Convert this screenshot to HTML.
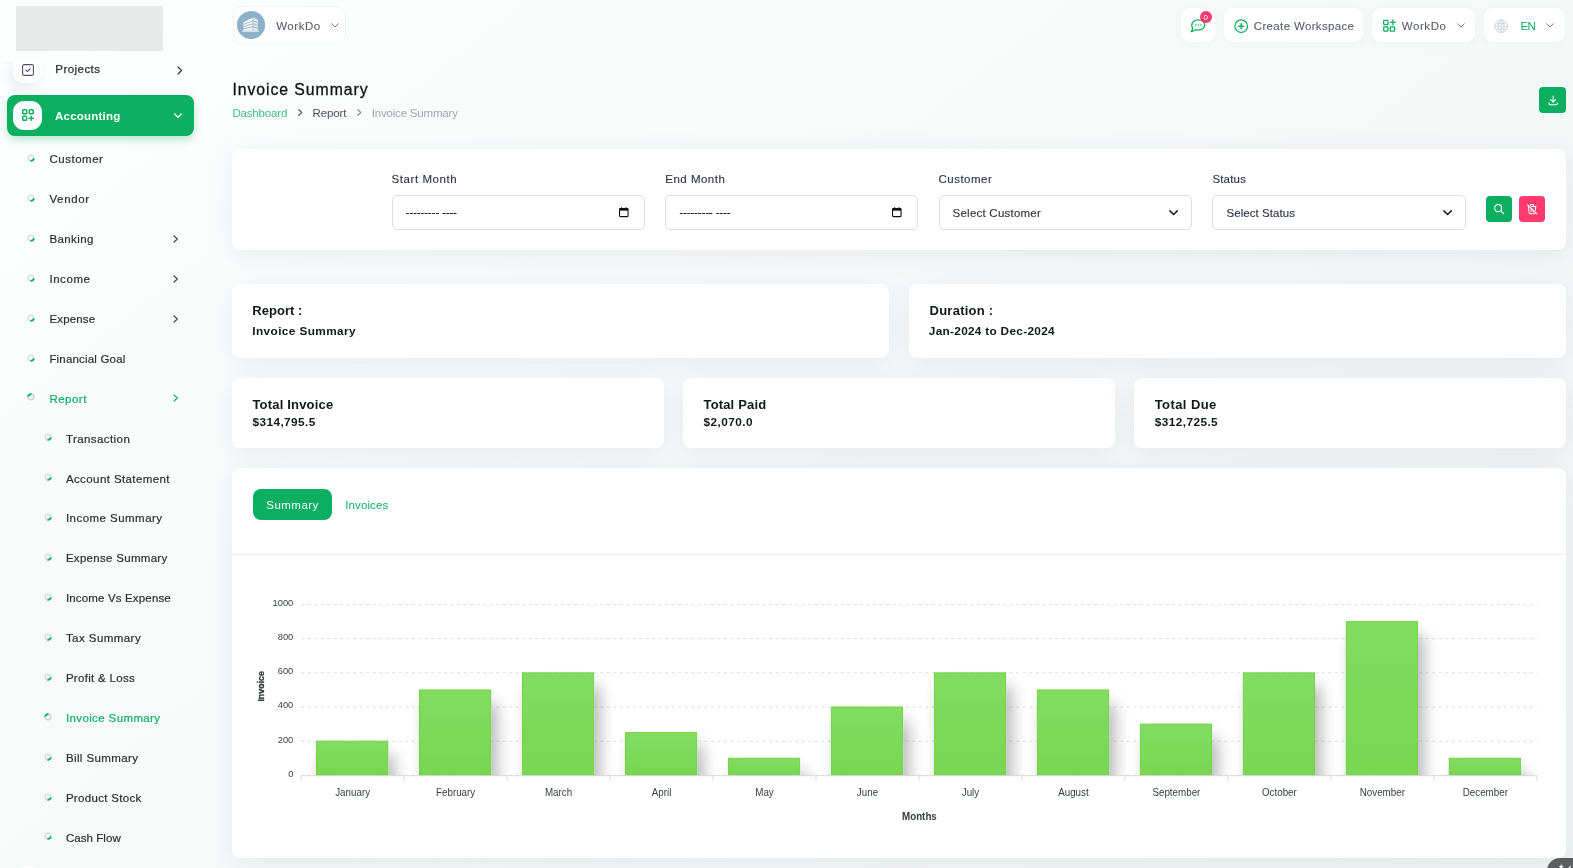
<!DOCTYPE html>
<html lang="en">
<head>
<meta charset="utf-8">
<title>Invoice Summary</title>
<style>
*{box-sizing:border-box;margin:0;padding:0}
html,body{width:1573px;height:868px;overflow:hidden}
body{background:linear-gradient(141.55deg,#fdfefe 3.46%,#f0f4f3 99.86%);font-family:"Liberation Sans",sans-serif;color:#293240;position:relative;font-size:12px}
.t{position:absolute;white-space:nowrap}
svg{position:absolute;overflow:visible}
#sidebar{position:absolute;left:0;top:0;width:212px;height:868px}
.logo{position:absolute;left:16px;top:6px;width:147px;height:45px;background:#e8eae9}
.bul{position:absolute;width:7px;height:7px}
.hbox{position:absolute;top:8.3px;height:33.4px;background:#fff;border-radius:9px;box-shadow:0 1px 6px rgba(190,198,210,.10)}
.card{position:absolute;background:#fff;border-radius:8px;box-shadow:0 5px 24px rgba(170,176,195,.21)}
.inp{position:absolute;border:1px solid #dadde3;border-radius:5px;background:#fff}
.btn{position:absolute;border-radius:4px}
</style>
</head>
<body>
<div id="root" style="position:absolute;left:0;top:0;width:1573px;height:868px;will-change:transform">

<div id="sidebar">
<div style="position:absolute;left:0;top:62px;width:212px;height:30px;overflow:hidden"><div style="position:absolute;left:13.4px;top:-7px;width:28.6px;height:28px;border-radius:11px;background:#fff;box-shadow:-4px 6px 14px rgba(150,160,180,.18)"></div></div>
<div class="logo"></div>
<svg style="left:21.7px;top:63.7px" width="12" height="12" viewBox="0 0 12 12" fill="none" stroke="#4b5168" stroke-width="1.1" stroke-linecap="round" stroke-linejoin="round"><rect x="0.6" y="0.6" width="10.8" height="10.8" rx="1.6"/><path d="M3.9 6.2l1.5 1.5 2.7-2.9"/></svg>
<div class="t " style="left:55.30px;top:63.49px;font-size:11.5px;line-height:13.22px;letter-spacing:0.451px;color:#2d2f36;-webkit-text-stroke:.25px #2d2f36;">Projects</div>
<svg style="left:176.6px;top:65.6px" width="6" height="9" viewBox="0 0 6 9" fill="none" stroke="#3a3d45" stroke-width="1.3" stroke-linecap="round" stroke-linejoin="round"><path d="M1 1l3.6 3.5L1 8"/></svg>
<div style="position:absolute;left:7.3px;top:95px;width:187px;height:40.5px;border-radius:8px;background:#0caf60;box-shadow:0 4px 9px rgba(12,175,96,.28)"></div>
<div style="position:absolute;left:13.2px;top:100.7px;width:29px;height:29.3px;border-radius:11px;background:#fff"></div>
<svg style="left:21.6px;top:109.2px" width="12" height="12" viewBox="0 0 12 12" fill="none" stroke="#0caf60" stroke-width="1.45" stroke-linecap="round" stroke-linejoin="round"><rect x="0.7" y="0.7" width="4" height="4" rx=".8"/><rect x="7.2" y="0.7" width="4" height="4" rx=".8"/><rect x="0.7" y="7.2" width="4" height="4" rx=".8"/><path d="M9.2 7.1v4.2M7.1 9.2h4.2"/></svg>
<div class="t " style="left:55.10px;top:109.69px;font-size:11.5px;line-height:13.22px;letter-spacing:0.217px;color:#fff;font-weight:bold;">Accounting</div>
<svg style="left:174.4px;top:112.8px" width="8" height="6" viewBox="0 0 8 6" fill="none" stroke="#fff" stroke-width="1.3" stroke-linecap="round" stroke-linejoin="round"><path d="M0.8 1l3.2 3.4L7.2 1"/></svg>
<svg style="left:27.30px;top:154.00px" width="8" height="8" viewBox="0 0 8 8" fill="none"><circle cx="4" cy="4" r="2.85" stroke="#d7dae9" stroke-width="1.5"/><path d="M6.82 4.40A2.85 2.85 0 0 1 3.51 6.81" stroke="#0caf60" stroke-width="1.9"/></svg>
<div class="t " style="left:49.40px;top:153.29px;font-size:11.5px;line-height:13.22px;letter-spacing:0.531px;color:#2b2d31;-webkit-text-stroke:.2px #2b2d31;">Customer</div>
<svg style="left:27.30px;top:193.91px" width="8" height="8" viewBox="0 0 8 8" fill="none"><circle cx="4" cy="4" r="2.85" stroke="#d7dae9" stroke-width="1.5"/><path d="M6.82 4.40A2.85 2.85 0 0 1 3.51 6.81" stroke="#0caf60" stroke-width="1.9"/></svg>
<div class="t " style="left:49.40px;top:193.20px;font-size:11.5px;line-height:13.22px;letter-spacing:0.654px;color:#2b2d31;-webkit-text-stroke:.2px #2b2d31;">Vendor</div>
<svg style="left:27.30px;top:233.82px" width="8" height="8" viewBox="0 0 8 8" fill="none"><circle cx="4" cy="4" r="2.85" stroke="#d7dae9" stroke-width="1.5"/><path d="M6.82 4.40A2.85 2.85 0 0 1 3.51 6.81" stroke="#0caf60" stroke-width="1.9"/></svg>
<div class="t " style="left:49.40px;top:233.11px;font-size:11.5px;line-height:13.22px;letter-spacing:0.400px;color:#2b2d31;-webkit-text-stroke:.2px #2b2d31;">Banking</div>
<svg style="left:172.8px;top:234.72px" width="6" height="8" viewBox="0 0 6 8" fill="none" stroke="#3a3d45" stroke-width="1.25" stroke-linecap="round" stroke-linejoin="round"><path d="M1 0.9l3.3 3.1L1 7.1"/></svg>
<svg style="left:27.30px;top:273.73px" width="8" height="8" viewBox="0 0 8 8" fill="none"><circle cx="4" cy="4" r="2.85" stroke="#d7dae9" stroke-width="1.5"/><path d="M6.82 4.40A2.85 2.85 0 0 1 3.51 6.81" stroke="#0caf60" stroke-width="1.9"/></svg>
<div class="t " style="left:49.40px;top:273.02px;font-size:11.5px;line-height:13.22px;letter-spacing:0.563px;color:#2b2d31;-webkit-text-stroke:.2px #2b2d31;">Income</div>
<svg style="left:172.8px;top:274.63px" width="6" height="8" viewBox="0 0 6 8" fill="none" stroke="#3a3d45" stroke-width="1.25" stroke-linecap="round" stroke-linejoin="round"><path d="M1 0.9l3.3 3.1L1 7.1"/></svg>
<svg style="left:27.30px;top:313.64px" width="8" height="8" viewBox="0 0 8 8" fill="none"><circle cx="4" cy="4" r="2.85" stroke="#d7dae9" stroke-width="1.5"/><path d="M6.82 4.40A2.85 2.85 0 0 1 3.51 6.81" stroke="#0caf60" stroke-width="1.9"/></svg>
<div class="t " style="left:49.40px;top:312.93px;font-size:11.5px;line-height:13.22px;letter-spacing:0.157px;color:#2b2d31;-webkit-text-stroke:.2px #2b2d31;">Expense</div>
<svg style="left:172.8px;top:314.54px" width="6" height="8" viewBox="0 0 6 8" fill="none" stroke="#3a3d45" stroke-width="1.25" stroke-linecap="round" stroke-linejoin="round"><path d="M1 0.9l3.3 3.1L1 7.1"/></svg>
<svg style="left:27.30px;top:353.55px" width="8" height="8" viewBox="0 0 8 8" fill="none"><circle cx="4" cy="4" r="2.85" stroke="#d7dae9" stroke-width="1.5"/><path d="M6.82 4.40A2.85 2.85 0 0 1 3.51 6.81" stroke="#0caf60" stroke-width="1.9"/></svg>
<div class="t " style="left:49.40px;top:352.84px;font-size:11.5px;line-height:13.22px;letter-spacing:0.188px;color:#2b2d31;-webkit-text-stroke:.2px #2b2d31;">Financial Goal</div>
<svg style="left:27.30px;top:393.46px" width="8" height="8" viewBox="0 0 8 8" fill="none"><circle cx="4" cy="4" r="2.85" stroke="#ccd1dd" stroke-width="1.5"/><path d="M1.18 3.60A2.85 2.85 0 0 1 4.49 1.19" stroke="#0caf60" stroke-width="1.9"/></svg>
<div class="t " style="left:49.40px;top:392.75px;font-size:11.5px;line-height:13.22px;letter-spacing:0.484px;color:#0caf60;-webkit-text-stroke:.2px #0caf60;">Report</div>
<svg style="left:172.8px;top:394.36px" width="6" height="8" viewBox="0 0 6 8" fill="none" stroke="#0caf60" stroke-width="1.25" stroke-linecap="round" stroke-linejoin="round"><path d="M1 0.9l3.3 3.1L1 7.1"/></svg>
<svg style="left:44.40px;top:433.37px" width="8" height="8" viewBox="0 0 8 8" fill="none"><circle cx="4" cy="4" r="2.85" stroke="#d7dae9" stroke-width="1.5"/><path d="M6.82 4.40A2.85 2.85 0 0 1 3.51 6.81" stroke="#0caf60" stroke-width="1.9"/></svg>
<div class="t " style="left:65.90px;top:432.66px;font-size:11.5px;line-height:13.22px;letter-spacing:0.427px;color:#2b2d31;-webkit-text-stroke:.2px #2b2d31;">Transaction</div>
<svg style="left:44.40px;top:473.28px" width="8" height="8" viewBox="0 0 8 8" fill="none"><circle cx="4" cy="4" r="2.85" stroke="#d7dae9" stroke-width="1.5"/><path d="M6.82 4.40A2.85 2.85 0 0 1 3.51 6.81" stroke="#0caf60" stroke-width="1.9"/></svg>
<div class="t " style="left:65.90px;top:472.57px;font-size:11.5px;line-height:13.22px;letter-spacing:0.405px;color:#2b2d31;-webkit-text-stroke:.2px #2b2d31;">Account Statement</div>
<svg style="left:44.40px;top:513.19px" width="8" height="8" viewBox="0 0 8 8" fill="none"><circle cx="4" cy="4" r="2.85" stroke="#d7dae9" stroke-width="1.5"/><path d="M6.82 4.40A2.85 2.85 0 0 1 3.51 6.81" stroke="#0caf60" stroke-width="1.9"/></svg>
<div class="t " style="left:65.90px;top:512.48px;font-size:11.5px;line-height:13.22px;letter-spacing:0.466px;color:#2b2d31;-webkit-text-stroke:.2px #2b2d31;">Income Summary</div>
<svg style="left:44.40px;top:553.10px" width="8" height="8" viewBox="0 0 8 8" fill="none"><circle cx="4" cy="4" r="2.85" stroke="#d7dae9" stroke-width="1.5"/><path d="M6.82 4.40A2.85 2.85 0 0 1 3.51 6.81" stroke="#0caf60" stroke-width="1.9"/></svg>
<div class="t " style="left:65.90px;top:552.39px;font-size:11.5px;line-height:13.22px;letter-spacing:0.299px;color:#2b2d31;-webkit-text-stroke:.2px #2b2d31;">Expense Summary</div>
<svg style="left:44.40px;top:593.01px" width="8" height="8" viewBox="0 0 8 8" fill="none"><circle cx="4" cy="4" r="2.85" stroke="#d7dae9" stroke-width="1.5"/><path d="M6.82 4.40A2.85 2.85 0 0 1 3.51 6.81" stroke="#0caf60" stroke-width="1.9"/></svg>
<div class="t " style="left:65.90px;top:592.30px;font-size:11.5px;line-height:13.22px;letter-spacing:0.161px;color:#2b2d31;-webkit-text-stroke:.2px #2b2d31;">Income Vs Expense</div>
<svg style="left:44.40px;top:632.92px" width="8" height="8" viewBox="0 0 8 8" fill="none"><circle cx="4" cy="4" r="2.85" stroke="#d7dae9" stroke-width="1.5"/><path d="M6.82 4.40A2.85 2.85 0 0 1 3.51 6.81" stroke="#0caf60" stroke-width="1.9"/></svg>
<div class="t " style="left:65.90px;top:632.21px;font-size:11.5px;line-height:13.22px;letter-spacing:0.446px;color:#2b2d31;-webkit-text-stroke:.2px #2b2d31;">Tax Summary</div>
<svg style="left:44.40px;top:672.83px" width="8" height="8" viewBox="0 0 8 8" fill="none"><circle cx="4" cy="4" r="2.85" stroke="#d7dae9" stroke-width="1.5"/><path d="M6.82 4.40A2.85 2.85 0 0 1 3.51 6.81" stroke="#0caf60" stroke-width="1.9"/></svg>
<div class="t " style="left:65.90px;top:672.12px;font-size:11.5px;line-height:13.22px;letter-spacing:0.306px;color:#2b2d31;-webkit-text-stroke:.2px #2b2d31;">Profit &amp; Loss</div>
<svg style="left:44.40px;top:712.74px" width="8" height="8" viewBox="0 0 8 8" fill="none"><circle cx="4" cy="4" r="2.85" stroke="#ccd1dd" stroke-width="1.5"/><path d="M1.18 3.60A2.85 2.85 0 0 1 4.49 1.19" stroke="#0caf60" stroke-width="1.9"/></svg>
<div class="t " style="left:65.90px;top:712.03px;font-size:11.5px;line-height:13.22px;letter-spacing:0.383px;color:#0caf60;-webkit-text-stroke:.2px #0caf60;">Invoice Summary</div>
<svg style="left:44.40px;top:752.65px" width="8" height="8" viewBox="0 0 8 8" fill="none"><circle cx="4" cy="4" r="2.85" stroke="#d7dae9" stroke-width="1.5"/><path d="M6.82 4.40A2.85 2.85 0 0 1 3.51 6.81" stroke="#0caf60" stroke-width="1.9"/></svg>
<div class="t " style="left:65.90px;top:751.94px;font-size:11.5px;line-height:13.22px;letter-spacing:0.397px;color:#2b2d31;-webkit-text-stroke:.2px #2b2d31;">Bill Summary</div>
<svg style="left:44.40px;top:792.56px" width="8" height="8" viewBox="0 0 8 8" fill="none"><circle cx="4" cy="4" r="2.85" stroke="#d7dae9" stroke-width="1.5"/><path d="M6.82 4.40A2.85 2.85 0 0 1 3.51 6.81" stroke="#0caf60" stroke-width="1.9"/></svg>
<div class="t " style="left:65.90px;top:791.85px;font-size:11.5px;line-height:13.22px;letter-spacing:0.310px;color:#2b2d31;-webkit-text-stroke:.2px #2b2d31;">Product Stock</div>
<svg style="left:44.40px;top:832.47px" width="8" height="8" viewBox="0 0 8 8" fill="none"><circle cx="4" cy="4" r="2.85" stroke="#d7dae9" stroke-width="1.5"/><path d="M6.82 4.40A2.85 2.85 0 0 1 3.51 6.81" stroke="#0caf60" stroke-width="1.9"/></svg>
<div class="t " style="left:65.90px;top:831.76px;font-size:11.5px;line-height:13.22px;letter-spacing:0.067px;color:#2b2d31;-webkit-text-stroke:.2px #2b2d31;">Cash Flow</div>
<div style="position:absolute;left:16px;top:865.5px;width:26px;height:20px;border-radius:10px;background:#fff"></div>
</div>
<div class="hbox" style="left:232.700px;top:6.3px;width:112.900px;height:37.700px;border-radius:9px;border:1px solid #f3f4f5;box-shadow:none"></div>
<svg style="left:237px;top:10.9px" width="28.1" height="28.1" viewBox="0 0 28 28"><circle cx="14" cy="14" r="14" fill="#8db0cb"/><path d="M6.300 11.100L15.900 6.500V19.500H6.300z" fill="#f2f6f9"/><path d="M15.900 6.500l4.900 2.300V19.500h-4.900z" fill="#dfe9f0"/><path d="M6.300 13.500l9.600-3.700 4.900 1.900M6.300 15.700l9.600-2.900 4.900 1.500M6.300 17.700l9.600-1.900 4.900 1.100" fill="none" stroke="#8db0cb" stroke-width=".8"/><path d="M15.900 6.500V19.500" stroke="#8db0cb" stroke-width=".6"/><rect x="5.200" y="19.400" width="16.600" height="1.200" fill="#f2f6f9"/></svg>
<div class="t " style="left:276.20px;top:19.99px;font-size:11.5px;line-height:13.22px;letter-spacing:0.535px;color:#555b70;-webkit-text-stroke:.08px #555b70;">WorkDo</div>
<svg style="left:330.5px;top:22.8px" width="8" height="5" viewBox="0 0 8 5" fill="none" stroke="#6a6f83" stroke-width=".95" stroke-linecap="round" stroke-linejoin="round"><path d="M0.7 0.8l3.3 3.2 3.3-3.2"/></svg>
<div class="hbox" style="left:1180.7px;width:34.4px"></div>
<svg style="left:1190.4px;top:19.2px" width="15.5" height="13.5" viewBox="0 0 31 27" fill="none" stroke="#0caf60" stroke-width="2.6" stroke-linecap="round" stroke-linejoin="round"><path d="M16.5 1.6c7.2 0 13 4.6 13 10.3s-5.8 10.3-13 10.3c-1.9 0-3.7-.3-5.3-.9-1.700 1.800-5.100 3.700-8.900 3.900 1.900-1.700 3.100-4.300 3.300-6.400C4.300 17 3.500 14.600 3.500 11.900 3.500 6.200 9.300 1.600 16.500 1.600z"/><g stroke="none" fill="#0caf60"><circle cx="11.3" cy="12.2" r="1.5"/><circle cx="16.500" cy="12.2" r="1.5"/><circle cx="21.7" cy="12.2" r="1.5"/></g></svg>
<div style="position:absolute;left:1199.6px;top:10.5px;width:12.4px;height:12.4px;border-radius:50%;background:#ff3a6e"></div>
<div class="t " style="left:1203.50px;top:13.16px;font-size:8px;line-height:9.20px;letter-spacing:0.000px;color:#fff;">0</div>
<div class="hbox" style="left:1224px;width:139.2px"></div>
<svg style="left:1234px;top:18.6px" width="14.4" height="14.4" viewBox="0 0 14.4 14.4" fill="none" stroke="#0caf60" stroke-width="1.25" stroke-linecap="round"><circle cx="7.2" cy="7.2" r="6.3"/><path d="M7.2 4.7v5M4.7 7.200h5" stroke-width="1.4"/></svg>
<div class="t " style="left:1253.80px;top:19.99px;font-size:11.5px;line-height:13.22px;letter-spacing:0.345px;color:#555b70;-webkit-text-stroke:.08px #555b70;">Create Workspace</div>
<div class="hbox" style="left:1371.9px;width:103px"></div>
<svg style="left:1382.6px;top:19.4px" width="13.4" height="12.8" viewBox="0 0 13.4 12.8" fill="none" stroke="#0caf60" stroke-width="1.3" stroke-linecap="round" stroke-linejoin="round"><rect x="0.7" y="1.3" width="4.3" height="4.3" rx=".7"/><rect x="0.700" y="7.8" width="4.3" height="4.3" rx=".7"/><rect x="7.3" y="7.8" width="4.3" height="4.3" rx=".7"/><path d="M9.9 0.8v5M7.4 3.3h5"/></svg>
<div class="t " style="left:1401.70px;top:19.99px;font-size:11.5px;line-height:13.22px;letter-spacing:0.595px;color:#555b70;-webkit-text-stroke:.08px #555b70;">WorkDo</div>
<svg style="left:1456.8px;top:22.8px" width="8" height="5" viewBox="0 0 8 5" fill="none" stroke="#6a6f83" stroke-width=".95" stroke-linecap="round" stroke-linejoin="round"><path d="M0.7 0.8l3.3 3.2 3.3-3.2"/></svg>
<div class="hbox" style="left:1483.8px;width:81.1px"></div>
<svg style="left:1494.2px;top:18.6px" width="14.4" height="14.4" viewBox="0 0 14.4 14.4" fill="none" stroke="#d2d5da" stroke-width="1"><circle cx="7.2" cy="7.2" r="6.4"/><ellipse cx="7.2" cy="7.2" rx="2.8" ry="6.4"/><path d="M0.8 7.2h12.8M7.2 0.8v12.800M1.900 3.900c3.300 1.100 7.300 1.100 10.600 0M1.900 10.500c3.300-1.100 7.300-1.100 10.600 0"/></svg>
<div class="t " style="left:1520.40px;top:19.99px;font-size:11.5px;line-height:13.22px;letter-spacing:-0.476px;color:#0caf60;">EN</div>
<svg style="left:1546.4px;top:22.8px" width="8" height="5" viewBox="0 0 8 5" fill="none" stroke="#6a6f83" stroke-width=".95" stroke-linecap="round" stroke-linejoin="round"><path d="M0.7 0.8l3.3 3.2 3.3-3.2"/></svg>
<div class="t " style="left:232.40px;top:81.49px;font-size:15.8px;line-height:18.17px;letter-spacing:0.939px;color:#0f1114;-webkit-text-stroke:.3px #0f1114;">Invoice Summary</div>
<div class="t " style="left:232.40px;top:106.89px;font-size:11.5px;line-height:13.22px;letter-spacing:-0.158px;color:#43be85;">Dashboard</div>
<svg style="left:297.6px;top:109.4px" width="5" height="7" viewBox="0 0 5 7" fill="none" stroke="#5a5f6c" stroke-width="1.3" stroke-linecap="round" stroke-linejoin="round"><path d="M0.800 0.800l3 2.700-3 2.700"/></svg>
<div class="t " style="left:312.60px;top:106.89px;font-size:11.5px;line-height:13.22px;letter-spacing:-0.144px;color:#4a4f5e;">Report</div>
<svg style="left:356.5px;top:109.4px" width="5" height="7" viewBox="0 0 5 7" fill="none" stroke="#8a8e98" stroke-width="1.3" stroke-linecap="round" stroke-linejoin="round"><path d="M0.800 0.800l3 2.700-3 2.700"/></svg>
<div class="t " style="left:371.70px;top:106.89px;font-size:11.5px;line-height:13.22px;letter-spacing:-0.181px;color:#a0a4ad;">Invoice Summary</div>
<div class="btn" style="left:1539.4px;top:87.2px;width:26.6px;height:26px;background:#0caf60"></div>
<svg style="left:1546.75px;top:94.4px" width="12.2" height="12.2" viewBox="0 0 24 24" fill="none" stroke="#fff" stroke-width="2" stroke-linecap="round" stroke-linejoin="round"><path d="M4 17v2a2 2 0 0 0 2 2h12a2 2 0 0 0 2-2v-2M7 11l5 5 5-5M12 4v12"/></svg>
<div class="card" style="left:232px;top:148.6px;width:1334.2px;height:101.6px"></div>
<div class="t " style="left:391.60px;top:173.39px;font-size:11.5px;line-height:13.22px;letter-spacing:0.556px;color:#2c3345;-webkit-text-stroke:.12px #2c3345;">Start Month</div>
<div class="t " style="left:665.30px;top:173.39px;font-size:11.5px;line-height:13.22px;letter-spacing:0.485px;color:#2c3345;-webkit-text-stroke:.12px #2c3345;">End Month</div>
<div class="t " style="left:938.50px;top:173.39px;font-size:11.5px;line-height:13.22px;letter-spacing:0.493px;color:#2c3345;-webkit-text-stroke:.12px #2c3345;">Customer</div>
<div class="t " style="left:1212.40px;top:173.39px;font-size:11.5px;line-height:13.22px;letter-spacing:0.180px;color:#2c3345;-webkit-text-stroke:.12px #2c3345;">Status</div>
<div class="inp" style="left:391.6px;top:195.3px;width:253.2px;height:34.4px"></div>
<div class="t " style="left:405.80px;top:206.49px;font-size:10.5px;line-height:12.07px;letter-spacing:0.202px;color:#111;-webkit-text-stroke:.25px #111;">--------- ----</div>
<svg style="left:618.6px;top:206.8px" width="9.6" height="10.2" viewBox="0 0 9.6 10.2" fill="none" stroke="#111" stroke-width="1.1"><rect x="0.55" y="1.5" width="8.5" height="8.100" rx=".8"/><path d="M0.55 2.600h8.500" stroke-width="2.100"/><path d="M2.600 0.200v1.600M7 0.200v1.600" stroke-width="1.1"/></svg>
<div class="inp" style="left:665.3px;top:195.3px;width:253.2px;height:34.4px"></div>
<div class="t " style="left:679.50px;top:206.49px;font-size:10.5px;line-height:12.07px;letter-spacing:0.202px;color:#111;-webkit-text-stroke:.25px #111;">--------- ----</div>
<svg style="left:892.3px;top:206.8px" width="9.6" height="10.2" viewBox="0 0 9.6 10.2" fill="none" stroke="#111" stroke-width="1.1"><rect x="0.55" y="1.5" width="8.5" height="8.100" rx=".8"/><path d="M0.55 2.600h8.500" stroke-width="2.100"/><path d="M2.600 0.200v1.600M7 0.200v1.600" stroke-width="1.1"/></svg>
<div class="inp" style="left:938.5px;top:195.3px;width:253.3px;height:34.4px"></div>
<div class="t " style="left:952.60px;top:206.99px;font-size:11.5px;line-height:13.22px;letter-spacing:0.228px;color:#2c3345;-webkit-text-stroke:.12px #2c3345;">Select Customer</div>
<svg style="left:1168.9px;top:210px" width="9.2" height="5.600" viewBox="0 0 9.2 5.6" fill="none" stroke="#1f2126" stroke-width="1.5" stroke-linecap="round" stroke-linejoin="round"><path d="M0.900 0.900l3.700 3.700 3.700-3.700"/></svg>
<div class="inp" style="left:1212.4px;top:195.3px;width:253.3px;height:34.4px"></div>
<div class="t " style="left:1226.50px;top:206.99px;font-size:11.5px;line-height:13.22px;letter-spacing:0.062px;color:#2c3345;-webkit-text-stroke:.12px #2c3345;">Select Status</div>
<svg style="left:1442.8px;top:210px" width="9.2" height="5.600" viewBox="0 0 9.2 5.6" fill="none" stroke="#1f2126" stroke-width="1.5" stroke-linecap="round" stroke-linejoin="round"><path d="M0.900 0.900l3.700 3.700 3.700-3.700"/></svg>
<div class="btn" style="left:1485.5px;top:196px;width:26.4px;height:26px;background:#0caf60"></div>
<svg style="left:1492.6px;top:203.0px" width="12.2" height="12.2" viewBox="0 0 24 24" fill="none" stroke="#fff" stroke-width="2.1" stroke-linecap="round" stroke-linejoin="round"><circle cx="10" cy="10" r="7"/><path d="M21 21l-6-6"/></svg>
<div class="btn" style="left:1518.7px;top:196px;width:26.6px;height:26px;background:#ff3a6e"></div>
<svg style="left:1525.9px;top:203.0px" width="12.2" height="12.2" viewBox="0 0 24 24" fill="none" stroke="#fff" stroke-width="2" stroke-linecap="round" stroke-linejoin="round"><path d="M3 3l18 18M4 7h3m4 0h9M10 11v6M14 14v3M5 7l1 12a2 2 0 0 0 2 2h8a2 2 0 0 0 2-2l.077-.923M18.384 14.373L19 7M9 5V4a1 1 0 0 1 1-1h4a1 1 0 0 1 1 1v3"/></svg>
<div class="card" style="left:232px;top:283.8px;width:657.4px;height:74px"></div>
<div class="card" style="left:908.8px;top:283.8px;width:657.4px;height:74px"></div>
<div class="t " style="left:252.30px;top:304.43px;font-size:13px;line-height:14.95px;letter-spacing:0.024px;color:#14171c;font-weight:bold;">Report :</div>
<div class="t " style="left:252.30px;top:325.22px;font-size:11.8px;line-height:13.57px;letter-spacing:0.399px;color:#14171c;font-weight:bold;">Invoice Summary</div>
<div class="t " style="left:929.50px;top:304.43px;font-size:13px;line-height:14.95px;letter-spacing:0.257px;color:#14171c;font-weight:bold;">Duration :</div>
<div class="t " style="left:928.80px;top:325.22px;font-size:11.8px;line-height:13.57px;letter-spacing:0.303px;color:#14171c;font-weight:bold;">Jan-2024 to Dec-2024</div>
<div class="card" style="left:232px;top:378px;width:431.9px;height:70px"></div>
<div class="t " style="left:252.40px;top:398.43px;font-size:13px;line-height:14.95px;letter-spacing:0.192px;color:#14171c;font-weight:bold;">Total Invoice</div>
<div class="t " style="left:252.40px;top:415.82px;font-size:11.8px;line-height:13.57px;letter-spacing:0.438px;color:#14171c;font-weight:bold;">$314,795.5</div>
<div class="card" style="left:683.1px;top:378px;width:431.9px;height:70px"></div>
<div class="t " style="left:703.50px;top:398.43px;font-size:13px;line-height:14.95px;letter-spacing:0.161px;color:#14171c;font-weight:bold;">Total Paid</div>
<div class="t " style="left:703.50px;top:415.82px;font-size:11.8px;line-height:13.57px;letter-spacing:0.438px;color:#14171c;font-weight:bold;">$2,070.0</div>
<div class="card" style="left:1134.3px;top:378px;width:431.9px;height:70px"></div>
<div class="t " style="left:1154.70px;top:398.43px;font-size:13px;line-height:14.95px;letter-spacing:0.417px;color:#14171c;font-weight:bold;">Total Due</div>
<div class="t " style="left:1154.70px;top:415.82px;font-size:11.8px;line-height:13.57px;letter-spacing:0.438px;color:#14171c;font-weight:bold;">$312,725.5</div>
<div class="card" style="left:232px;top:468px;width:1334.2px;height:390px"></div>
<div style="position:absolute;left:252.7px;top:488.7px;width:79.1px;height:31.2px;border-radius:8px;background:#0caf60"></div>
<div class="t " style="left:266.30px;top:499.29px;font-size:11.5px;line-height:13.22px;letter-spacing:0.466px;color:#fff;">Summary</div>
<div class="t " style="left:345.20px;top:499.29px;font-size:11.5px;line-height:13.22px;letter-spacing:0.116px;color:#0caf60;">Invoices</div>
<div style="position:absolute;left:232px;top:554px;width:1334.2px;height:1px;background:#f1f1f1"></div>
<svg style="left:0;top:0" width="1573" height="868" viewBox="0 0 1573 868" font-family="Liberation Sans, sans-serif">
<defs><linearGradient id="bg" x1="0" y1="0" x2="0" y2="1"><stop offset="0" stop-color="#82dc61"/><stop offset="1" stop-color="#78d652"/></linearGradient><filter id="sh" filterUnits="userSpaceOnUse" x="250" y="560" width="1330" height="300"><feGaussianBlur in="SourceAlpha" stdDeviation="8"/><feOffset dx="5.6" dy="14.4"/><feComponentTransfer><feFuncA type="linear" slope="0.29"/></feComponentTransfer><feMerge><feMergeNode/><feMergeNode in="SourceGraphic"/></feMerge></filter><clipPath id="cp"><rect x="299.15" y="590" width="1239.6399999999999" height="185.89999999999995"/></clipPath></defs>
<line x1="301.15" y1="775.30" x2="1536.79" y2="775.30" stroke="#dedede" stroke-width="1" stroke-dasharray="3.2 3.3"/>
<text x="293.3" y="776.70" text-anchor="end" font-size="9.3px" fill="#373d3f">0</text>
<line x1="301.15" y1="741.16" x2="1536.79" y2="741.16" stroke="#dedede" stroke-width="1" stroke-dasharray="3.2 3.3"/>
<text x="293.3" y="742.56" text-anchor="end" font-size="9.3px" fill="#373d3f">200</text>
<line x1="301.15" y1="707.02" x2="1536.79" y2="707.02" stroke="#dedede" stroke-width="1" stroke-dasharray="3.2 3.3"/>
<text x="293.3" y="708.42" text-anchor="end" font-size="9.3px" fill="#373d3f">400</text>
<line x1="301.15" y1="672.88" x2="1536.79" y2="672.88" stroke="#dedede" stroke-width="1" stroke-dasharray="3.2 3.3"/>
<text x="293.3" y="674.28" text-anchor="end" font-size="9.3px" fill="#373d3f">600</text>
<line x1="301.15" y1="638.74" x2="1536.79" y2="638.74" stroke="#dedede" stroke-width="1" stroke-dasharray="3.2 3.3"/>
<text x="293.3" y="640.14" text-anchor="end" font-size="9.3px" fill="#373d3f">800</text>
<line x1="301.15" y1="604.60" x2="1536.79" y2="604.60" stroke="#dedede" stroke-width="1" stroke-dasharray="3.2 3.3"/>
<text x="293.3" y="606.00" text-anchor="end" font-size="9.3px" fill="#373d3f">1000</text>
<g clip-path="url(#cp)">
<rect x="316.55" y="741.16" width="71.20" height="34.14" fill="url(#bg)" stroke="#74d24d" stroke-width="1" filter="url(#sh)"/>
<rect x="419.52" y="689.95" width="71.20" height="85.35" fill="url(#bg)" stroke="#74d24d" stroke-width="1" filter="url(#sh)"/>
<rect x="522.49" y="672.88" width="71.20" height="102.42" fill="url(#bg)" stroke="#74d24d" stroke-width="1" filter="url(#sh)"/>
<rect x="625.46" y="732.62" width="71.20" height="42.67" fill="url(#bg)" stroke="#74d24d" stroke-width="1" filter="url(#sh)"/>
<rect x="728.43" y="758.23" width="71.20" height="17.07" fill="url(#bg)" stroke="#74d24d" stroke-width="1" filter="url(#sh)"/>
<rect x="831.40" y="707.02" width="71.20" height="68.28" fill="url(#bg)" stroke="#74d24d" stroke-width="1" filter="url(#sh)"/>
<rect x="934.37" y="672.88" width="71.20" height="102.42" fill="url(#bg)" stroke="#74d24d" stroke-width="1" filter="url(#sh)"/>
<rect x="1037.34" y="689.95" width="71.20" height="85.35" fill="url(#bg)" stroke="#74d24d" stroke-width="1" filter="url(#sh)"/>
<rect x="1140.31" y="724.09" width="71.20" height="51.21" fill="url(#bg)" stroke="#74d24d" stroke-width="1" filter="url(#sh)"/>
<rect x="1243.28" y="672.88" width="71.20" height="102.42" fill="url(#bg)" stroke="#74d24d" stroke-width="1" filter="url(#sh)"/>
<rect x="1346.25" y="621.67" width="71.20" height="153.63" fill="url(#bg)" stroke="#74d24d" stroke-width="1" filter="url(#sh)"/>
<rect x="1449.22" y="758.23" width="71.20" height="17.07" fill="url(#bg)" stroke="#74d24d" stroke-width="1" filter="url(#sh)"/>
</g>
<line x1="301.15" y1="775.6999999999999" x2="1536.79" y2="775.6999999999999" stroke="#dcdcdc" stroke-width="1"/>
<line x1="301.15" y1="775.6999999999999" x2="301.15" y2="780.9" stroke="#dcdcdc" stroke-width="1"/>
<line x1="404.12" y1="775.6999999999999" x2="404.12" y2="780.9" stroke="#dcdcdc" stroke-width="1"/>
<line x1="507.09" y1="775.6999999999999" x2="507.09" y2="780.9" stroke="#dcdcdc" stroke-width="1"/>
<line x1="610.06" y1="775.6999999999999" x2="610.06" y2="780.9" stroke="#dcdcdc" stroke-width="1"/>
<line x1="713.03" y1="775.6999999999999" x2="713.03" y2="780.9" stroke="#dcdcdc" stroke-width="1"/>
<line x1="816.00" y1="775.6999999999999" x2="816.00" y2="780.9" stroke="#dcdcdc" stroke-width="1"/>
<line x1="918.97" y1="775.6999999999999" x2="918.97" y2="780.9" stroke="#dcdcdc" stroke-width="1"/>
<line x1="1021.94" y1="775.6999999999999" x2="1021.94" y2="780.9" stroke="#dcdcdc" stroke-width="1"/>
<line x1="1124.91" y1="775.6999999999999" x2="1124.91" y2="780.9" stroke="#dcdcdc" stroke-width="1"/>
<line x1="1227.88" y1="775.6999999999999" x2="1227.88" y2="780.9" stroke="#dcdcdc" stroke-width="1"/>
<line x1="1330.85" y1="775.6999999999999" x2="1330.85" y2="780.9" stroke="#dcdcdc" stroke-width="1"/>
<line x1="1433.82" y1="775.6999999999999" x2="1433.82" y2="780.9" stroke="#dcdcdc" stroke-width="1"/>
<line x1="1536.79" y1="775.6999999999999" x2="1536.79" y2="780.9" stroke="#dcdcdc" stroke-width="1"/>
<text transform="translate(352.63 796) scale(.875 1)" text-anchor="middle" font-size="11.2px" fill="#373d3f">January</text>
<text transform="translate(455.61 796) scale(.875 1)" text-anchor="middle" font-size="11.2px" fill="#373d3f">February</text>
<text transform="translate(558.57 796) scale(.875 1)" text-anchor="middle" font-size="11.2px" fill="#373d3f">March</text>
<text transform="translate(661.54 796) scale(.875 1)" text-anchor="middle" font-size="11.2px" fill="#373d3f">April</text>
<text transform="translate(764.51 796) scale(.875 1)" text-anchor="middle" font-size="11.2px" fill="#373d3f">May</text>
<text transform="translate(867.49 796) scale(.875 1)" text-anchor="middle" font-size="11.2px" fill="#373d3f">June</text>
<text transform="translate(970.45 796) scale(.875 1)" text-anchor="middle" font-size="11.2px" fill="#373d3f">July</text>
<text transform="translate(1073.42 796) scale(.875 1)" text-anchor="middle" font-size="11.2px" fill="#373d3f">August</text>
<text transform="translate(1176.39 796) scale(.875 1)" text-anchor="middle" font-size="11.2px" fill="#373d3f">September</text>
<text transform="translate(1279.37 796) scale(.875 1)" text-anchor="middle" font-size="11.2px" fill="#373d3f">October</text>
<text transform="translate(1382.33 796) scale(.875 1)" text-anchor="middle" font-size="11.2px" fill="#373d3f">November</text>
<text transform="translate(1485.31 796) scale(.875 1)" text-anchor="middle" font-size="11.2px" fill="#373d3f">December</text>
<text transform="translate(919.4 820) scale(.875 1)" text-anchor="middle" font-size="11.2px" font-weight="bold" fill="#373d3f">Months</text>
<text transform="translate(264.1 686.3) rotate(-90)" text-anchor="middle" font-size="8.9px" font-weight="bold" fill="#2f3537" stroke="#2f3537" stroke-width=".35">Invoice</text>
</svg>
<div style="position:absolute;left:1546.5px;top:857.7px;width:40px;height:30px;border-radius:13px;background:#5c5e60"></div>
<svg style="left:1558.5px;top:863.8px" width="12" height="7" viewBox="0 0 14 8" fill="#fff"><path d="M2.600 0l.9 2.100 2.100.9-2.100.9-.9 2.100-.9-2.100L-.4 3l2.100-.9z"/><path d="M9 6.500l4-4.500 1 .9-4 4.500z"/></svg>
</div>
</body>
</html>
